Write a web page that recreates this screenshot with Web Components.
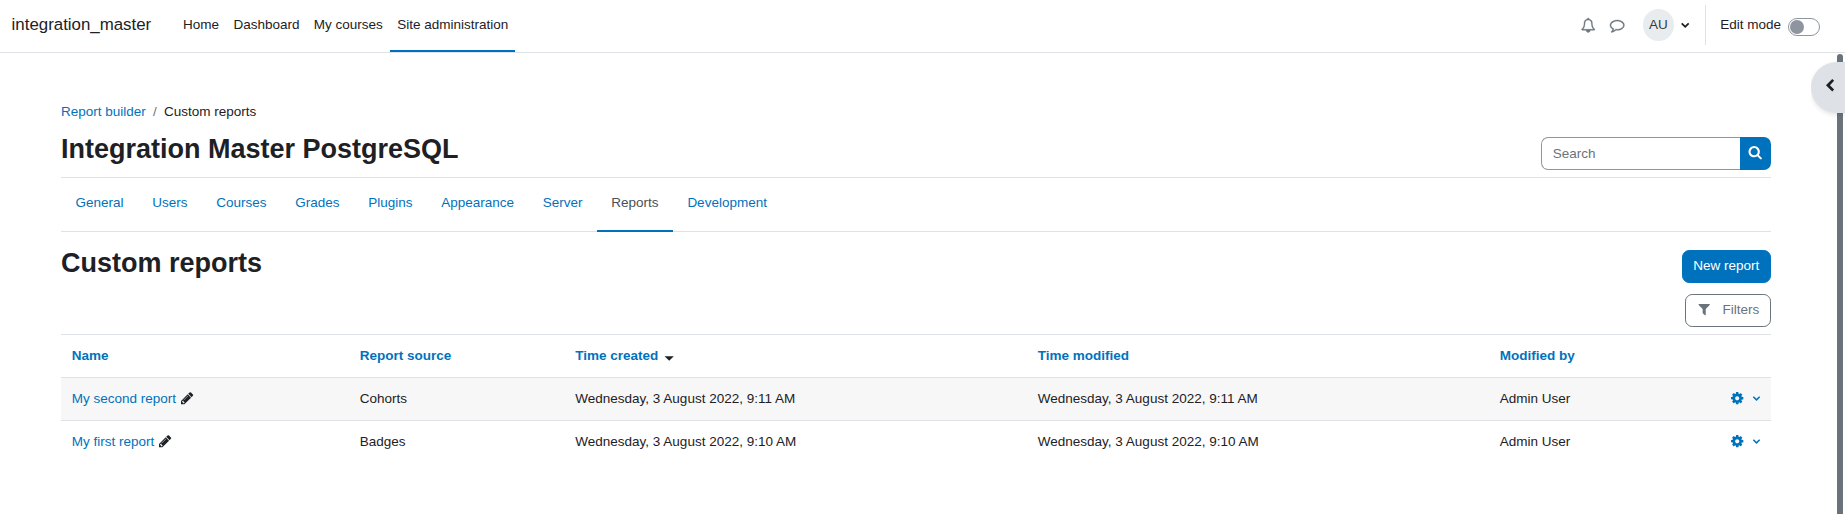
<!DOCTYPE html>
<html lang="en">
<head>
<meta charset="utf-8">
<title>Custom reports</title>
<style>
  body {
    --primary: #0072bd;
    margin: 0;
    height: 514px;
    overflow: hidden;
    background: #fff;
    color: #1d2125;
    font: 13.5px/20.25px "Liberation Sans", Arial, sans-serif;
  }
</style>
</head>
<body>
<site-navbar brand="integration_master">
  <nav-link>Home</nav-link>
  <nav-link>Dashboard</nav-link>
  <nav-link>My courses</nav-link>
  <nav-link active>Site administration</nav-link>
  <user-tools slot="tools" initials="AU"></user-tools>
</site-navbar>
<page-drawer></page-drawer>
<main-page>
  <bread-crumb slot="breadcrumb" parent="Report builder" current="Custom reports"></bread-crumb>
  <span slot="title">Integration Master PostgreSQL</span>
  <search-box slot="search"></search-box>
  <tab-bar slot="tabs">
    <tab-link>General</tab-link>
    <tab-link>Users</tab-link>
    <tab-link>Courses</tab-link>
    <tab-link>Grades</tab-link>
    <tab-link>Plugins</tab-link>
    <tab-link>Appearance</tab-link>
    <tab-link>Server</tab-link>
    <tab-link active>Reports</tab-link>
    <tab-link>Development</tab-link>
  </tab-bar>
  <span slot="subtitle">Custom reports</span>
  <app-button slot="actions" primary>New report</app-button>
  <app-button slot="actions"><fa-icon name="filter"></fa-icon>Filters</app-button>
  <report-table></report-table>
</main-page>

<script>
const ICONS = {
  bell: 'M912 1696q0-16-16-16-59 0-101.5-42.5t-42.5-101.5q0-16-16-16t-16 16q0 73 51.5 124.5t124.5 51.5q16 0 16-16zm-666-288h1300q-266-300-266-832 0-51-24-105t-69-103-121.5-80.5-169.5-31.5-169.5 31.5-121.5 80.5-69 103-24 105q0 532-266 832zm1482 0q0 52-38 90t-90 38h-448q0 106-75 181t-181 75-181-75-75-181h-448q-52 0-90-38t-38-90q50-42 91-88t85-119.5 74.5-158.5 50-206 19.5-260q0-152 117-282.5t307-158.5q-8-19-8-39 0-40 28-68t68-28 68 28 28 68q0 20-8 39 190 28 307 158.5t117 282.5q0 139 19.5 260t50 206 74.5 158.5 85 119.5 91 88z',
  comment: 'M896 384q-204 0-381.5 69.5t-282 187.5-104.5 255q0 112 71.5 213.5t201.5 175.5l87 50-27 96q-24 91-70 172 152-63 275-171l43-38 57 6q69 8 130 8 204 0 381.5-69.5t282-187.5 104.5-255-104.5-255-282-187.5-381.5-69.5zm896 512q0 174-120 321.5t-326 233-450 85.5q-70 0-145-8-198 175-460 242-49 14-114 22h-5q-15 0-27-10.5t-16-27.5v-1q-3-4-.5-12t2-10 4.5-9.5l6-9 7-8.5 8-9q7-8 31-34.5t34.5-38 31-39.5 32.5-51 27-59 26-76q-157-89-247.5-220t-90.5-281q0-174 120-321.5t326-233 450-85.5 450 85.5 326 233 120 321.5z',
  search: 'M1216 832q0-185-131.5-316.5t-316.5-131.5-316.5 131.5-131.5 316.5 131.5 316.5 316.5 131.5 316.5-131.5 131.5-316.5zm512 832q0 52-38 90t-90 38q-54 0-90-38l-343-342q-179 124-399 124-143 0-273.5-55.5t-225-150-150-225-55.5-273.5 55.5-273.5 150-225 225-150 273.5-55.5 273.5 55.5 225 150 150 225 55.5 273.5q0 220-124 399l343 343q37 37 37 90z',
  filter: 'M1595 295q17 41-14 70l-493 493v742q0 42-39 59-13 5-25 5-27 0-45-19l-256-256q-19-19-19-45v-486l-493-493q-31-29-14-70 17-39 59-39h1280q42 0 59 39z',
  cog: 'M1152 896q0-106-75-181t-181-75-181 75-75 181 75 181 181 75 181-75 75-181zm512-109v222q0 12-8 23t-20 13l-185 28q-19 54-39 91 35 50 107 138 10 12 10 25t-9 23q-27 37-99 108t-94 71q-12 0-26-9l-138-108q-44 23-91 38-16 136-29 186-7 28-36 28h-222q-14 0-24.5-8.5t-11.5-21.5l-28-184q-49-16-90-37l-141 107q-10 9-25 9-14 0-25-11-126-114-165-168-7-10-7-23 0-12 8-23 15-21 51-66.5t54-70.5q-27-50-41-99l-183-27q-13-2-21-12.5t-8-23.5v-222q0-12 8-23t19-13l186-28q14-46 39-92-40-57-107-138-10-12-10-24 0-10 9-23 26-36 98.5-107.5t94.5-71.5q13 0 26 10l138 107q44-23 91-38 16-136 29-186 7-28 36-28h222q14 0 24.5 8.5t11.5 21.5l28 184q49 16 90 37l142-107q9-9 24-9 13 0 25 10 129 119 165 170 7 8 7 22 0 12-8 23-15 21-51 66.5t-54 70.5q26 50 41 98l183 28q13 2 21 12.5t8 23.5z',
  pencil: 'M491 1536l91-91-235-235-91 91v107h128v128h107zm523-928q0-22-22-22-10 0-17 7l-542 542q-7 7-7 17 0 22 22 22 10 0 17-7l542-542q7-7 7-17zm-54-192l416 416-832 832h-416v-416zm683 96q0 53-37 90l-166 166-416-416 166-165q36-38 90-38 53 0 91 38l235 234q37 39 37 91z',
  down: 'M384 740l150-150 362 350 362-350 150 150-512 512z',
  left: 'M1260 350l-520 546 520 546-235 235-781-781 781-781z',
  sort: 'M320 1024h1152l-576 576z',
};

class BaseElement extends HTMLElement {
  connectedCallback() {
    if (this.shadowRoot) return;
    this.attachShadow({ mode: 'open' });
    this.shadowRoot.innerHTML = this.render();
  }
}

class FaIcon extends BaseElement {
  render() {
    return `
      <style>
        :host { display: inline-block; width: 14.4px; height: 14.4px; flex: none; }
        svg {
          display: block;
          width: 100%;
          height: 100%;
          fill: currentColor;
          stroke: currentColor;
          stroke-width: var(--icon-stroke, 0);
          overflow: visible;
        }
      </style>
      <svg viewBox="0 0 1792 1792"><path d="${ICONS[this.getAttribute('name')]}"/></svg>
    `;
  }
}

class SiteNavbar extends BaseElement {
  render() {
    return `
      <style>
        :host {
          display: flex;
          box-sizing: border-box;
          height: 53px;
          padding-left: 11.6px;
          border-bottom: 1px solid #dee2e6;
        }
        .brand { margin-right: 24.6px; font-size: 16.875px; line-height: 49px; }
        nav { display: flex; }
        .tools { display: flex; margin-left: auto; }
      </style>
      <div class="brand">${this.getAttribute('brand')}</div>
      <nav><slot></slot></nav>
      <div class="tools"><slot name="tools"></slot></div>
    `;
  }
}

class NavLink extends BaseElement {
  render() {
    return `
      <style>
        :host {
          display: block;
          box-sizing: border-box;
          height: 52px;
          padding: 0 7.2px;
          line-height: 49px;
          border-bottom: 2px solid transparent;
        }
        :host([active]) { border-color: var(--primary); }
      </style>
      <slot></slot>
    `;
  }
}

class UserTools extends BaseElement {
  render() {
    return `
      <style>
        :host { display: flex; height: 50px; align-items: center; padding-right: 25px; }
        .icon { --icon-stroke: 50; color: #6a737b; margin-right: 14.4px; }
        .avatar {
          width: 31.5px;
          height: 31.5px;
          margin-left: 4px;
          border-radius: 50%;
          background: #e9ecef;
          color: #343a40;
          line-height: 31.5px;
          text-align: center;
        }
        .caret { margin: 1px 12.6px 0 3.6px; }
        .edit { display: flex; align-items: center; height: 40px; margin-bottom: 1px; padding-left: 14.4px; border-left: 1px solid #dee2e6; }
        .label { padding-top: 1px; }
        .switch {
          box-sizing: border-box;
          width: 32px;
          height: 18px;
          margin: 4px 0 0 7px;
          padding: 1px;
          border: 1px solid #8f959e;
          border-radius: 9px;
        }
        .switch::before { content: ""; display: block; width: 14px; height: 14px; border-radius: 50%; background: #8f959e; }
      </style>
      <fa-icon class="icon" name="bell"></fa-icon>
      <fa-icon class="icon" name="comment"></fa-icon>
      <div class="avatar">${this.getAttribute('initials')}</div>
      <fa-icon class="caret" name="down"></fa-icon>
      <div class="edit"><span class="label">Edit mode</span><span class="switch"></span></div>
    `;
  }
}

// Scroll track and drawer opener, floating over the right edge of the page
class PageDrawer extends BaseElement {
  render() {
    return `
      <style>
        :host { position: absolute; top: 53px; right: 0; bottom: 0; width: 34px; overflow: hidden; }
        .thumb { position: absolute; top: 1px; right: 2px; bottom: -10px; width: 6px; border-radius: 3px; background: #6a737b; }
        .toggler {
          position: absolute;
          top: 9px;
          right: 0;
          display: flex;
          align-items: center;
          box-sizing: border-box;
          width: 34px;
          height: 51px;
          padding: 0 0 4px 13.4px;
          border-radius: 26px 0 0 26px;
          background: #dee2e6;
          box-shadow: 0 2px 4px rgba(0, 0, 0, .1);
        }
      </style>
      <div class="thumb"></div>
      <div class="toggler"><fa-icon name="left"></fa-icon></div>
    `;
  }
}

class MainPage extends BaseElement {
  render() {
    return `
      <style>
        :host { display: block; width: 1710px; margin: 49px 0 0 61px; }
        h1, h2 { margin: 0; font-size: 27px; line-height: 32.4px; }
        .title { display: flex; justify-content: space-between; height: 44px; margin-top: 11px; }
        .search { padding-top: 4px; }
        .heading { display: flex; justify-content: space-between; height: 87px; padding-top: 15px; }
        .actions { display: flex; flex-direction: column; align-items: flex-end; gap: 11px; padding-top: 3px; }
      </style>
      <slot name="breadcrumb"></slot>
      <div class="title">
        <h1><slot name="title"></slot></h1>
        <div class="search"><slot name="search"></slot></div>
      </div>
      <slot name="tabs"></slot>
      <div class="heading">
        <h2><slot name="subtitle"></slot></h2>
        <div class="actions"><slot name="actions"></slot></div>
      </div>
      <slot></slot>
    `;
  }
}

class BreadCrumb extends BaseElement {
  render() {
    return `
      <style>
        :host { display: flex; height: 20px; }
        a { color: var(--primary); }
        .sep { padding: 0 7.2px; color: #6a737b; }
      </style>
      <a>${this.getAttribute('parent')}</a><span class="sep">/</span><span>${this.getAttribute('current')}</span>
    `;
  }
}

class SearchBox extends BaseElement {
  render() {
    return `
      <style>
        :host { display: flex; width: 230px; height: 33px; }
        .field {
          flex: 1;
          box-sizing: border-box;
          padding-left: 10.8px;
          border: 1px solid #8f959e;
          border-right: 0;
          border-radius: 7.2px 0 0 7.2px;
          color: #6a737b;
          line-height: 31px;
        }
        .go { display: flex; justify-content: center; width: 31px; padding: 8px 0 0 0; box-sizing: border-box; border-radius: 0 7.2px 7.2px 0; background: var(--primary); color: #fff; }
      </style>
      <div class="field">Search</div>
      <div class="go"><fa-icon name="search"></fa-icon></div>
    `;
  }
}

class TabBar extends BaseElement {
  render() {
    return `
      <style>
        :host {
          display: flex;
          box-sizing: border-box;
          height: 55px;
          border-top: 1px solid #dee2e6;
          box-shadow: inset 0 -1px #dee2e6;
        }
      </style>
      <slot></slot>
    `;
  }
}

class TabLink extends BaseElement {
  render() {
    return `
      <style>
        :host {
          display: block;
          box-sizing: border-box;
          height: 54px;
          padding: 15px 14.39px 0;
          border-bottom: 2px solid transparent;
          color: var(--primary);
        }
        :host([active]) { border-color: var(--primary); color: #495057; }
      </style>
      <slot></slot>
    `;
  }
}

class AppButton extends BaseElement {
  render() {
    return `
      <style>
        :host {
          display: flex;
          box-sizing: border-box;
          height: 33px;
          padding: 0 10.8px;
          border: 1px solid #6a737b;
          border-radius: 7.2px;
          color: #6a737b;
          line-height: 30px;
        }
        :host([primary]) { padding-left: 10.2px; border-color: var(--primary); background: var(--primary); color: #fff; }
        ::slotted(fa-icon) { margin: 7px 11.5px 0 0; }
      </style>
      <slot></slot>
    `;
  }
}

class ReportTable extends BaseElement {
  render() {
    const rows = [
      ['My second report', 'Cohorts', 'Wednesday, 3 August 2022, 9:11 AM'],
      ['My first report', 'Badges', 'Wednesday, 3 August 2022, 9:10 AM'],
    ];

    return `
      <style>
        :host { display: block; }
        .row {
          display: grid;
          grid-template-columns: 288px 215.5px 462.5px 462px 1fr;
          box-sizing: border-box;
          height: 43px;
          border-top: 1px solid #dee2e6;
        }
        .row > * { display: flex; padding: 11px 10.8px 0; white-space: nowrap; }
        .striped { background: #f7f7f7; }
        .head { font-weight: bold; }
        .head, a { color: var(--primary); }
        .head fa-icon { margin: 1.5px 0 0 3.6px; color: #1d2125; }
        .edit { margin: 1.5px 0 0 3.6px; }
        .row .last { justify-content: space-between; }
        .menu { display: flex; gap: 5.6px; padding-top: 2px; color: var(--primary); }
        .menu .angle { width: 13px; height: 13px; margin: 1px -3px 0 0; }
      </style>
      <div class="row head">
        <div>Name</div>
        <div>Report source</div>
        <div>Time created<fa-icon name="sort"></fa-icon></div>
        <div>Time modified</div>
        <div>Modified by</div>
      </div>
      ${rows.map(([name, source, time], i) => `
        <div class="row ${i % 2 ? '' : 'striped'}">
          <div><a>${name}</a><fa-icon class="edit" name="pencil"></fa-icon></div>
          <div>${source}</div>
          <div>${time}</div>
          <div>${time}</div>
          <div class="last">
            Admin User
            <span class="menu"><fa-icon name="cog"></fa-icon><fa-icon class="angle" name="down"></fa-icon></span>
          </div>
        </div>
      `).join('')}
    `;
  }
}

customElements.define('fa-icon', FaIcon);
customElements.define('site-navbar', SiteNavbar);
customElements.define('nav-link', NavLink);
customElements.define('user-tools', UserTools);
customElements.define('page-drawer', PageDrawer);
customElements.define('main-page', MainPage);
customElements.define('bread-crumb', BreadCrumb);
customElements.define('search-box', SearchBox);
customElements.define('tab-bar', TabBar);
customElements.define('tab-link', TabLink);
customElements.define('app-button', AppButton);
customElements.define('report-table', ReportTable);
</script>
</body>
</html>
